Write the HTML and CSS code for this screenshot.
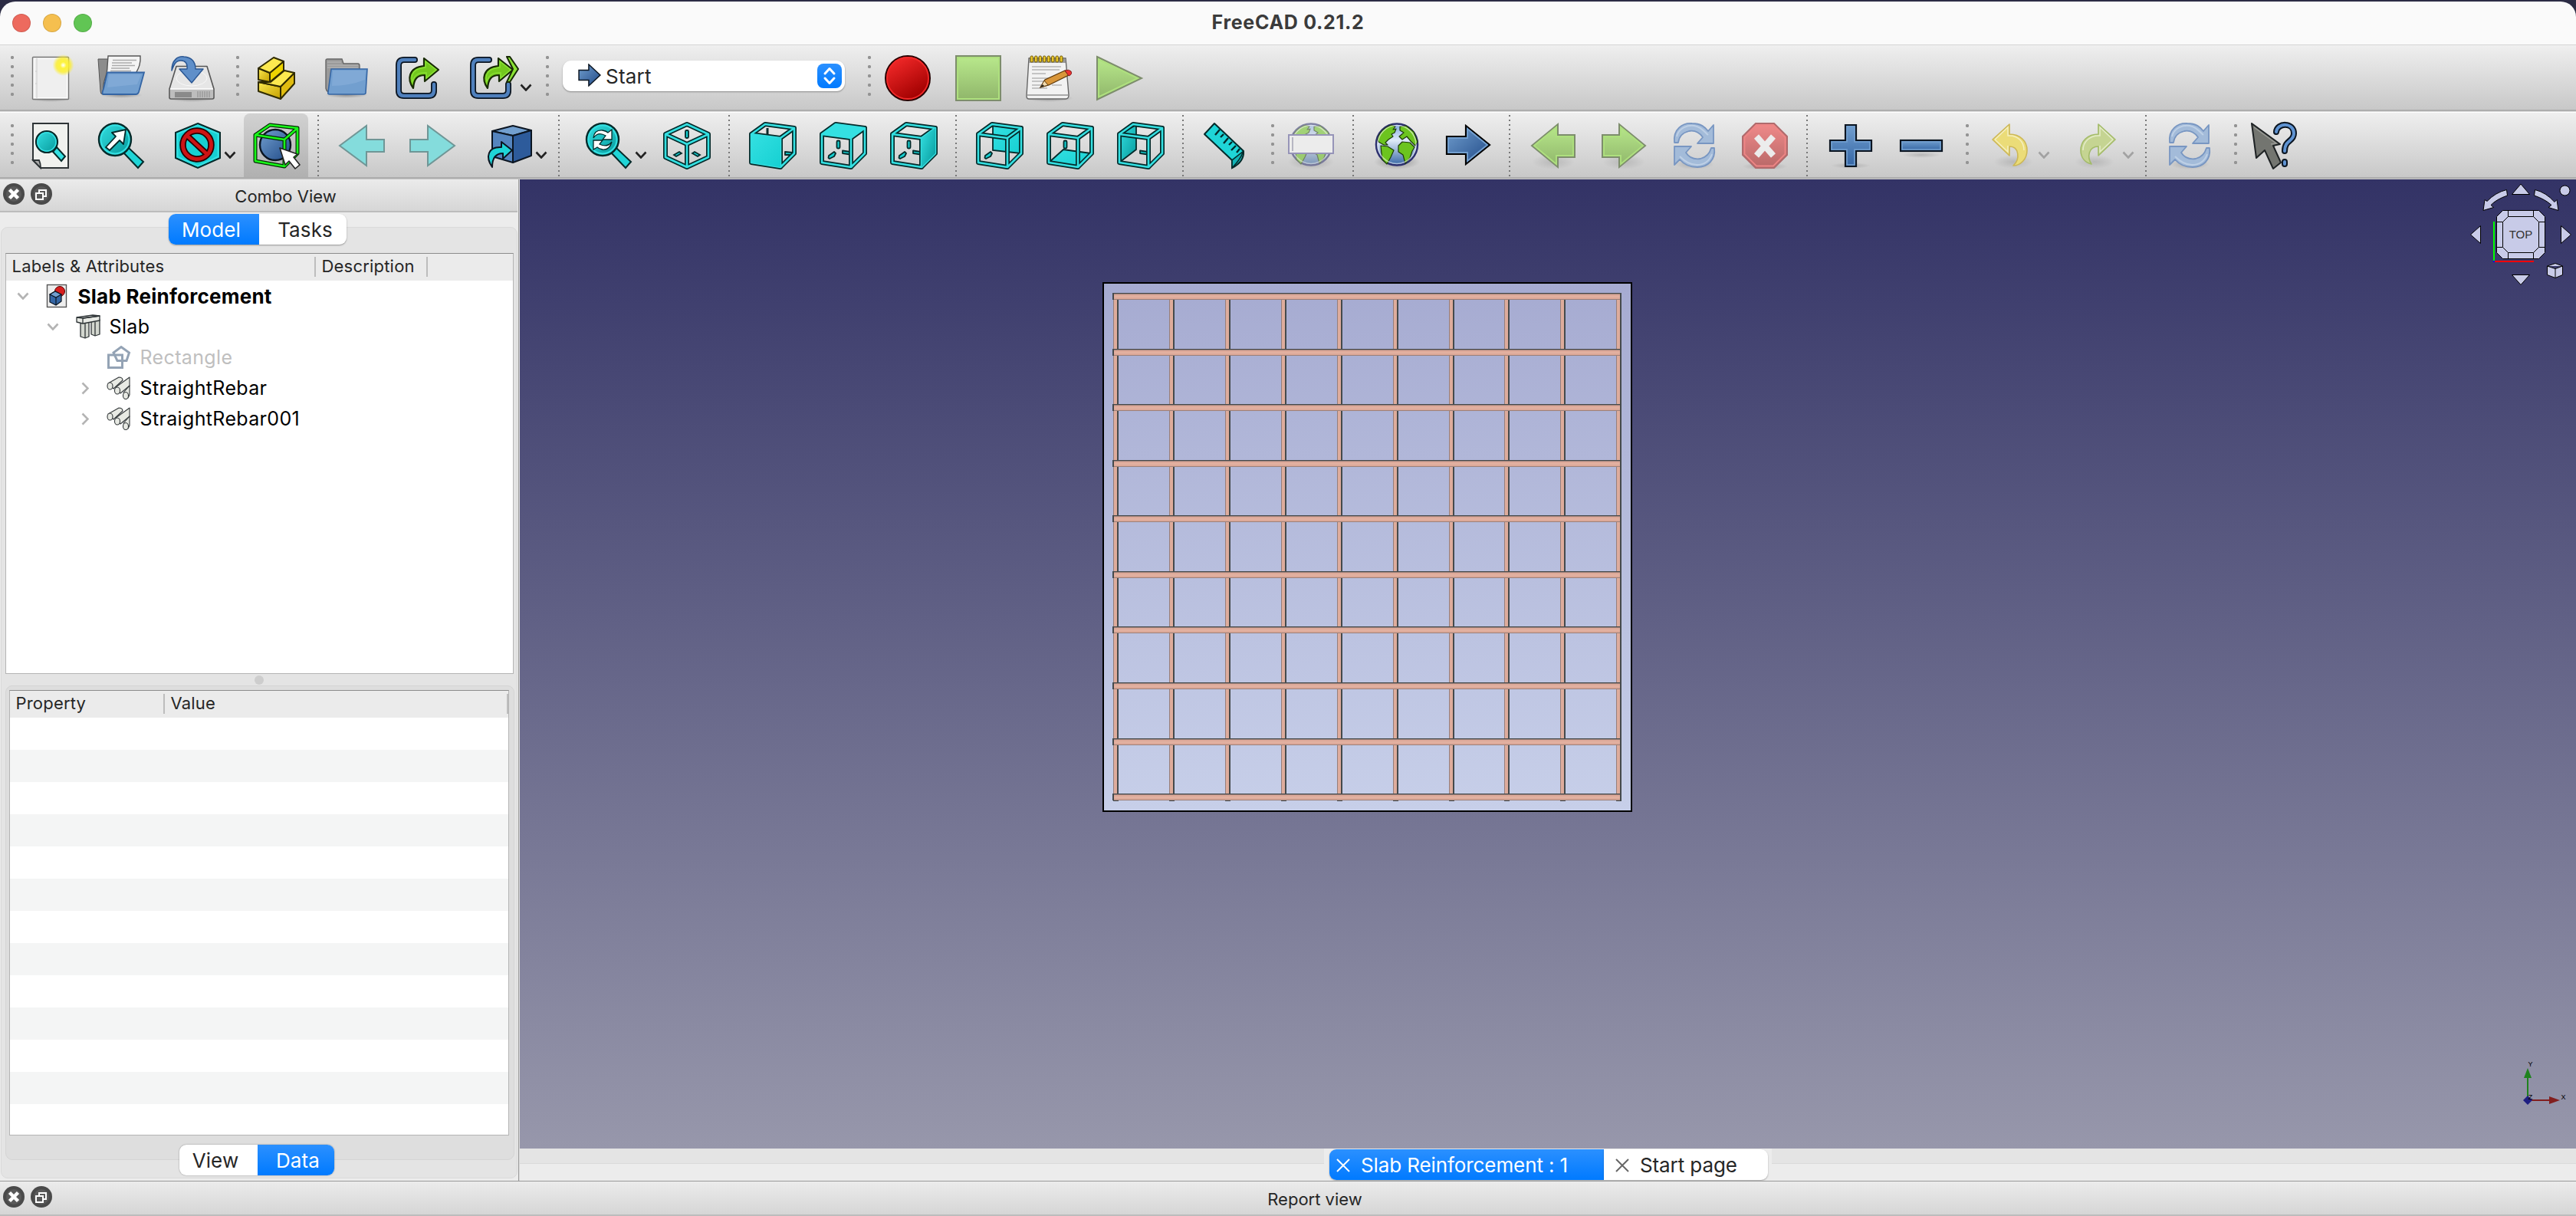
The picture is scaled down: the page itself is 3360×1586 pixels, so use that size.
FILE: index.html
```html
<!DOCTYPE html>
<html lang="en">
<head>
<meta charset="utf-8">
<title>FreeCAD 0.21.2</title>
<link rel="stylesheet" href="styles.css">
</head>
<body>
<svg class="defs" width="0" height="0">
  <defs>
    <linearGradient id="cy" x1="0" y1="0" x2="1" y2="1"><stop offset="0" stop-color="#34e0e2"/><stop offset="1" stop-color="#16d0d2"/></linearGradient>
    <linearGradient id="cyd" x1="0" y1="0" x2="1" y2="1"><stop offset="0" stop-color="#34e0e2"/><stop offset="1" stop-color="#06989a"/></linearGradient>
    <linearGradient id="bl" x1="0" y1="0" x2="1" y2="1"><stop offset="0" stop-color="#729fcf"/><stop offset="1" stop-color="#204a87"/></linearGradient>
    <linearGradient id="bl2" x1="0" y1="0" x2="0" y2="1"><stop offset="0" stop-color="#729fcf"/><stop offset="1" stop-color="#3465a4"/></linearGradient>
    <linearGradient id="gr" x1="0" y1="0" x2="0" y2="1"><stop offset="0" stop-color="#b9e98c"/><stop offset="1" stop-color="#8fb56a"/></linearGradient>
    <linearGradient id="rd" x1="0" y1="0" x2=".6" y2="1"><stop offset="0" stop-color="#ff2f2f"/><stop offset="1" stop-color="#a00000"/></linearGradient>
    <linearGradient id="pk" x1="0" y1="0" x2="0" y2="1"><stop offset="0" stop-color="#f08a8a"/><stop offset="1" stop-color="#b86868"/></linearGradient>
    <linearGradient id="ye" x1="0" y1="0" x2="1" y2="1"><stop offset="0" stop-color="#fce94f"/><stop offset="1" stop-color="#c4a000"/></linearGradient>
    <radialGradient id="sun"><stop offset="0" stop-color="#fff"/><stop offset=".3" stop-color="#fdf33c"/><stop offset=".65" stop-color="#fcee2a" stop-opacity=".8"/><stop offset="1" stop-color="#fcee2a" stop-opacity="0"/></radialGradient>
    <radialGradient id="shade"><stop offset="0" stop-color="#000" stop-opacity=".3"/><stop offset="1" stop-color="#000" stop-opacity="0"/></radialGradient>
    <linearGradient id="slab" x1="0" y1="0" x2="0" y2="1"><stop offset="0" stop-color="#a6abd1"/><stop offset="1" stop-color="#c7cfe9"/></linearGradient>
    <linearGradient id="ocean" x1="0" y1="0" x2="0" y2="1"><stop offset="0" stop-color="#7fa8dc"/><stop offset=".4" stop-color="#dfeaf8"/><stop offset="1" stop-color="#3465a4"/></linearGradient>

    <symbol id="frame" viewBox="0 0 64 64">
      <g fill="none" stroke-linejoin="round"><path d="M4 17 42 22 42 60 4 54ZM4 17 22 4 60 9 42 22M60 9V42L42 60" stroke="#042a2a" stroke-width="6"/><path d="M4 17 42 22 42 60 4 54ZM4 17 22 4 60 9 42 22M60 9V42L42 60" stroke="#34e0e2" stroke-width="2.600"/></g>
    </symbol>
    <symbol id="stubv" viewBox="0 0 64 64"><rect x="23.500" y="25.500" width="4" height="10" rx="1.500" fill="#16d0d2" stroke="#042a2a" stroke-width="1.800"/></symbol>
    <symbol id="stubh" viewBox="0 0 64 64"><path d="M31 38.500 41 40V43.500L31 42Z" fill="#16d0d2" stroke="#042a2a" stroke-width="1.800" stroke-linejoin="round"/></symbol>
    <symbol id="stubhr" viewBox="0 0 64 64"><path d="M48 40 58 41V44L48 44Z" fill="#16d0d2" stroke="#042a2a" stroke-width="1.800" stroke-linejoin="round"/></symbol>
    <symbol id="stubd" viewBox="0 0 64 64"><path d="M13 45 20 40 22 42 20 46 14 49 12.500 48Z" fill="#16d0d2" stroke="#042a2a" stroke-width="1.800" stroke-linejoin="round"/></symbol>

    <symbol id="chev" viewBox="0 0 16 10"><path d="M1.500 1.500 8 8.500 14.500 1.500" fill="none" stroke="currentColor" stroke-width="2.600"/></symbol>
    <symbol id="refresh" viewBox="0 0 64 64">
      <ellipse cx="32" cy="56" rx="26" ry="7" fill="url(#shade)" opacity=".6"/>
      <g fill="#a3bbd9" stroke="#7896c2" stroke-width="1.800" stroke-linejoin="round">
        <path d="M6 28C4 10 17 2 29 3 41 3 46 8 50 13L57 5V29H36L43 21C38 14 31 12 25 13 17 15 12 20 11 28Z"/>
        <path d="M58 35C60 51 49 60 36 60 25 60 18 56 13 50L6 57V33H28L21 41C26 49 33 50 40 49 48 47 52 42 54 35Z"/>
      </g>
      <path d="M9 20C12 8 24 5 32 6 42 8 46 15 50 18M55 43C51 54 43 57 35 57 24 57 17 50 13 46" fill="none" stroke="#bed0e6" stroke-width="2"/>
    </symbol>
    <symbol id="linkarrow" viewBox="0 0 64 64">
      <path d="M28 8H14Q7 8 7 15V48Q7 55 14 55H46Q53 55 53 48V40" fill="none" stroke="#0b1521" stroke-width="8" stroke-linecap="round"/>
      <path d="M28 8H14Q7 8 7 15V48Q7 55 14 55H46Q53 55 53 48V40" fill="none" stroke="#4f80bd" stroke-width="4.500" stroke-linecap="round"/>
      <path d="M40 6 59 21 41 36V28C31 28 27 33 26 45 18 34 19 18 40 16Z" fill="#73c81e" stroke="#172a04" stroke-width="2.200" stroke-linejoin="round"/>
      <path d="M42 10 56 21 43 32V25C32 24 27 28 25 37 22 27 27 19 42 18Z" fill="none" stroke="#8ae234" stroke-width="1.400"/>
    </symbol>
    <symbol id="rebar" viewBox="0 0 32 32">
      <g fill="#e8eae4" stroke="#33383a" stroke-width="1.100" stroke-linejoin="round">
        <path d="M2 10 16 2Q21 2 21 6L9 17Z"/><ellipse cx="4.500" cy="13.500" rx="3.500" ry="4.500"/>
        <path d="M12 15 30 2V13L18 23Z"/><ellipse cx="14" cy="19.500" rx="3.500" ry="4.500"/>
        <path d="M22 22 30 13V25L28 29Z"/><ellipse cx="25" cy="26" rx="3.500" ry="4.500"/>
      </g>
    </symbol>
    <symbol id="dockx" viewBox="0 0 28 28"><circle cx="14" cy="14" r="14" fill="#4a4a4a"/><circle cx="14" cy="14" r="10" fill="#5a5a5a"/><path d="M8.500 8.500 19.500 19.500M19.500 8.500 8.500 19.500" stroke="#fff" stroke-width="4.500"/></symbol>
    <symbol id="dockf" viewBox="0 0 28 28"><circle cx="14" cy="14" r="14" fill="#4a4a4a"/><circle cx="14" cy="14" r="10" fill="#5a5a5a"/><path d="M11 12V9H20V17H17M7 13H16V21H7Z" fill="none" stroke="#fff" stroke-width="2"/></symbol>
    <symbol id="globe" viewBox="0 0 64 64">
      <ellipse cx="32" cy="53" rx="30" ry="10" fill="url(#shade)"/>
      <circle cx="32" cy="30.500" r="27" fill="url(#ocean)" stroke="#2e3170" stroke-width="2.600"/>
      <g fill="#6cc41f" stroke="#1c3a08" stroke-width="1.200" stroke-linejoin="round">
        <path d="M7 24C9 14 17 8 25 5L30 7 27 11 31 10 29 15 25 17 27 20 21 24 17 28 20 31 15 31 8 27Z"/>
        <path d="M11 32 20 33 28 38 24 47 19 56 13 50 12 42Z"/>
        <path d="M34 32 39 27 49 28 55 34 52 39 49 48 43 55 40 44 34 40Z"/>
        <path d="M36 7 44 6 54 14 59 27 56 32 50 26 45 20 39 24 35 20 41 15 36 12Z"/>
      </g>
      <circle cx="32" cy="30.500" r="25" fill="none" stroke="#fff" stroke-opacity=".55" stroke-width="1.600"/>
    </symbol>
  </defs>
</svg>

<div class="window">
  <header class="titlebar">
    <div class="lights"><i class="red"></i><i class="amber"></i><i class="green"></i></div>
    <h1>FreeCAD 0.21.2</h1>
  </header>

  <div class="toolbar">
    <span class="handle first"></span>
    <button class="btn"><svg viewBox="0 0 64 64"><ellipse cx="32" cy="59" rx="28" ry="4" fill="url(#shade)"/><rect x="8.500" y="4.500" width="47" height="55" rx="1" fill="#efefef" stroke="#777" stroke-width="1.400"/><rect x="10.500" y="6.500" width="43" height="51" fill="none" stroke="#fff"/><path d="M14 6V58M12 23h2M12 39h2" stroke="#ccc"/><circle cx="48.500" cy="15" r="14" fill="url(#sun)"/></svg></button>
    <button class="btn"><svg viewBox="0 0 64 64"><ellipse cx="32" cy="54" rx="28" ry="4" fill="url(#shade)"/><path d="M2 7H30L40 50 8 53Q5 53 5 49Z" fill="#8c8c8c" stroke="#555"/><path d="M15 3H57C58 14 54 20 51 26L50 45H9C8 35 14 30 14 17Z" fill="#f4f4f4" stroke="#555" stroke-width="1.400"/><path d="M21 8.500h31M20 12h26M20 15.500h30M19 19h24M18 22.500h27" stroke="#aaa" stroke-width="1.500"/><path d="M14 24.500H62L55 50Q54 53 51 53H9Q6 53 9 46Z" fill="#729fcf" stroke="#3465a4" stroke-width="1.800"/><path d="M16 27H58L53 40 14 44Z" fill="#8db3dd" opacity=".5"/></svg></button>
    <button class="btn"><svg viewBox="0 0 64 64"><ellipse cx="32" cy="59" rx="31" ry="4" fill="url(#shade)"/><path d="M12 16.500H52L61 46V57Q61 59 59 59H5Q3 59 3 57V46Z" fill="#e6e6e6" stroke="#555" stroke-width="1.600" stroke-linejoin="round"/><path d="M4 46H60V58H4Z" fill="#bdbdbd"/><path d="M4 46H60" stroke="#fff" stroke-width="1.500"/><rect x="10" y="50" width="22" height="7" fill="#8a8a8a"/><path d="M40 49v8M43 49v8M46 49v8M49 49v8M52 49v8M55 49v8" stroke="#888"/><ellipse cx="32" cy="32" rx="20" ry="10" fill="none" stroke="#f8f8f8"/><path d="M6 22C6 8 14 3 22 4 33 5 37 11 37 20H47L32 38 16 20H26C27 12 23 9 18 9 11 9 9 14 6 22Z" fill="#5f8fc9" stroke="#2b5793" stroke-width="1.500" stroke-linejoin="round"/></svg></button>
    <span class="handle"></span>
    <button class="btn"><svg viewBox="0 0 64 64"><g stroke="#302b00" stroke-width="2" stroke-linejoin="round"><path d="M9 37 38 43V59L9 49Z" fill="url(#ye)"/><path d="M38 43 56 25V39L38 59Z" fill="#e0bc10"/><path d="M25 37 43 22 56 25 38 43 9 37Z" fill="#fce94f"/><path d="M9 19 24 25V37L9 34Z" fill="url(#ye)"/><path d="M24 25 42 10V22L24 37Z" fill="#edd400"/><path d="M9 19 29 5 42 10 24 25Z" fill="#fce94f"/></g></svg></button>
    <button class="btn"><svg viewBox="0 0 64 64"><ellipse cx="32" cy="54" rx="28" ry="4" fill="url(#shade)"/><path d="M5 9Q5 7 7 7H26L28 13H47Q49 13 49 16V50H10Q6 50 5 45Z" fill="#9a9a9a" stroke="#666" stroke-width="1.400"/><path d="M7 11h18M7 15h40M7 18h40" stroke="#bbb"/><path d="M12 20H59L57 51Q57 53 54 53H10Q7 53 8 50Z" fill="#729fcf" stroke="#3465a4" stroke-width="1.600"/><path d="M14 22H57L56 34Q36 42 13 42Z" fill="#8db3dd" opacity=".5"/></svg></button>
    <button class="btn"><svg viewBox="0 0 64 64"><use href="#linkarrow" x="1"/></svg></button>
    <button class="btn menu"><svg viewBox="0 0 64 64"><use href="#linkarrow" x="-2"/><path d="M49 4H53L64 20 53 37H49L57 20Z" fill="#8ae234" stroke="#172a04" stroke-width="2" stroke-linejoin="round"/></svg><svg class="chev"><use href="#chev"/></svg></button>
    <span class="handle"></span>
    <div class="combo"><svg class="combo-icon" viewBox="0 0 28 28"><path d="M1 8H13V1L27 14 13 27V20H1Z" fill="url(#bl)" stroke="#0b1521" stroke-width="1.400"/></svg><span>Start</span><i class="stepper"><svg viewBox="0 0 32 32"><path d="M10 13 16 6.500 22 13M10 19 16 25.500 22 19" fill="none" stroke="#fff" stroke-width="3" stroke-linecap="round" stroke-linejoin="round"/></svg></i></div>
    <span class="handle"></span>
    <button class="btn"><svg viewBox="0 0 64 64"><circle cx="32" cy="32" r="29" fill="url(#rd)" stroke="#280000" stroke-width="2"/><circle cx="32" cy="32" r="27" fill="none" stroke="#ef2929" stroke-width="1.800"/></svg></button>
    <button class="btn"><svg viewBox="0 0 64 64"><rect x="3" y="3" width="58" height="58" fill="url(#gr)" stroke="#7d8d6c" stroke-width="2"/><rect x="5" y="5" width="54" height="54" fill="none" stroke="#aee07e" stroke-width="2"/></svg></button>
    <button class="btn"><svg viewBox="0 0 64 64"><ellipse cx="32" cy="58" rx="32" ry="5" fill="url(#shade)"/><path d="M6 6H54L58 54Q58 59 54 59H6Q3 59 3 55Z" fill="#f2f2f2" stroke="#666" stroke-width="1.400"/><path d="M6 7H54V12H6Z" fill="#999"/><path d="M4 54H57" stroke="#aaa" stroke-width="2"/><path d="M10 17h38M10 21h36M10 26h18M10 32h38M10 36h28M10 41h18M36 41h13M10 45h20" stroke="#b5b5b5" stroke-width="1.400"/><g fill="#e8c52a" stroke="#6b5500" stroke-width="1"><rect x="8" y="3" width="3.500" height="8" rx="1.500"/><rect x="13.500" y="3" width="3.500" height="8" rx="1.500"/><rect x="19" y="3" width="3.500" height="8" rx="1.500"/><rect x="24.500" y="3" width="3.500" height="8" rx="1.500"/><rect x="30" y="3" width="3.500" height="8" rx="1.500"/><rect x="35.500" y="3" width="3.500" height="8" rx="1.500"/><rect x="41" y="3" width="3.500" height="8" rx="1.500"/><rect x="46.500" y="3" width="3.500" height="8" rx="1.500"/></g><path d="M21 44 27 34 53 22 58 28 32 41Z" fill="#d9963a" stroke="#5e3a0c" stroke-width="1.300"/><path d="M21 44 26 35 31 41Z" fill="#f3dcae" stroke="#5e3a0c"/><path d="M21 44 24 40 26 42Z" fill="#222"/><path d="M53 22Q58 20 61 23 63 27 58 29Z" fill="#e33" stroke="#802020"/></svg></button>
    <button class="btn"><svg viewBox="0 0 64 64"><path d="M3 4 61 32 3 60Z" fill="url(#gr)" stroke="#7d8d6c" stroke-width="2"/><path d="M5 7.500 56 32 5 56.500Z" fill="none" stroke="#aee07e" stroke-width="2"/></svg></button>
  </div>

  <div class="toolbar second">
    <span class="handle first"></span>
    <button class="btn"><svg viewBox="0 0 64 64"><path d="M9 3H55V61H19L9 51Z" fill="#f0f1ee" stroke="#2e3436" stroke-width="2"/><path d="M9 51H17Q19 55 19 61Z" fill="#aaa" stroke="#2e3436" stroke-width="1.800"/><path d="M35 40 40 34 51 46 46 52Z" fill="#34e0e2" stroke="#042a2a" stroke-width="2"/><circle cx="27" cy="27" r="14" fill="url(#cyd)" stroke="#042a2a" stroke-width="2.200"/><circle cx="27" cy="27" r="12" fill="none" stroke="#34e0e2" stroke-width="1.500"/></svg></button>
    <button class="btn"><svg viewBox="0 0 64 64"><path d="M35 41 42 35 61 53 54 61Z" fill="#1fd5d7" stroke="#042a2a" stroke-width="2"/><circle cx="24" cy="24" r="21" fill="url(#cyd)" stroke="#042a2a" stroke-width="2.400"/><circle cx="24" cy="24" r="18.500" fill="none" stroke="#34e0e2" stroke-width="2"/><path d="M38 11 20 15 25 20 12 34 17 38 30 25 35 30Z" fill="#fff" stroke="#042a2a" stroke-width="1.800" stroke-linejoin="round"/></svg></button>
    <button class="btn menu"><svg viewBox="0 0 64 64"><path d="M32 3 61 15V48L32 61 3 48V15Z" fill="#16d0d2" stroke="#042a2a" stroke-width="2"/><path d="M32 5.500 58.500 16.500V46.500L32 58.500 5.500 46.500V16.500Z" fill="none" stroke="#34e0e2" stroke-width="2"/><g fill="none"><circle cx="31" cy="31" r="18.500" stroke="#280000" stroke-width="8.500"/><path d="M17 18 45 44" stroke="#280000" stroke-width="8"/><circle cx="31" cy="31" r="18.500" stroke="#cc1414" stroke-width="5"/><path d="M17 18 45 44" stroke="#cc1414" stroke-width="4.500"/></g></svg><svg class="chev"><use href="#chev"/></svg></button>
    <button class="btn on"><svg viewBox="0 0 64 64"><circle cx="31" cy="31" r="20" fill="url(#bl)" stroke="#0b1521" stroke-width="2.400"/><g fill="none" stroke-linejoin="round"><path d="M5 18 43 24 43 59 5 52ZM5 18 24 5 60 9 43 24M60 9V42L43 59" stroke="#052b05" stroke-width="5"/><path d="M5 18 43 24 43 59 5 52ZM5 18 24 5 60 9 43 24M60 9V42L43 59" stroke="#18f818" stroke-width="2.600"/></g><path d="M37 35 60 43 55 47 63 57 57 62 49 52 44 57Z" fill="#fff" stroke="#222" stroke-width="1.600" stroke-linejoin="round"/></svg></button>
    <span class="sep"></span>
    <button class="btn dim"><svg viewBox="0 0 64 64"><path d="M3 32 38 6V24H61V40H38V58Z" fill="#84dcdc" stroke="#6f9696" stroke-width="2"/></svg></button>
    <button class="btn dim"><svg viewBox="0 0 64 64"><path d="M61 32 26 6V24H3V40H26V58Z" fill="#84dcdc" stroke="#6f9696" stroke-width="2"/></svg></button>
    <button class="btn menu"><svg viewBox="0 0 64 64"><g stroke="#0b1521" stroke-width="2" stroke-linejoin="round"><path d="M10 13 37 6 61 12 37 19Z" fill="#729fcf"/><path d="M10 13 37 19V54L10 46Z" fill="#5585bf"/><path d="M37 19 61 12V45L37 54Z" fill="#2d5b9b"/><path d="M22 27 36 38 24 49V42C15 42 10 47 10 60 1 47 4 33 22 34Z" fill="#1fd5d7"/></g></svg><svg class="chev"><use href="#chev"/></svg></button>
    <span class="sep"></span>
    <button class="btn menu"><svg viewBox="0 0 64 64"><path d="M35 41 42 35 61 53 54 61Z" fill="#1fd5d7" stroke="#042a2a" stroke-width="2"/><circle cx="24" cy="24" r="21" fill="url(#cyd)" stroke="#042a2a" stroke-width="2.400"/><circle cx="24" cy="24" r="18.500" fill="none" stroke="#34e0e2" stroke-width="2"/><path d="M12 22Q13 11 24 12 29 13 31 15L36 11V24H24L28 19Q18 13 12 22ZM36 27Q33 38 24 37 19 36 17 34L12 37V25H24L20 30Q30 35 36 27Z" fill="#fff" stroke="#042a2a" stroke-width="1.300"/></svg><svg class="chev"><use href="#chev"/></svg></button>
    <button class="btn"><svg viewBox="0 0 64 64"><g fill="none" stroke-linejoin="round"><path d="M32 4 60 17V47L32 60 4 47V17ZM4 17 32 30 60 17M32 30V60" stroke="#042a2a" stroke-width="6"/><path d="M32 4 60 17V47L32 60 4 47V17ZM4 17 32 30 60 17M32 30V60" stroke="#34e0e2" stroke-width="2.600"/></g><g fill="#16d0d2" stroke="#042a2a" stroke-width="1.800"><rect x="30" y="12" width="4" height="10" rx="1.500"/><path d="M15 44 22 40 25 42 18 46ZM49 44 42 40 39 42 46 46Z"/></g></svg></button>
    <span class="sep"></span>
    <button class="btn"><svg viewBox="0 0 64 64"><path d="M25 9V18" stroke="#042a2a" stroke-width="3"/><use href="#stubhr"/><use href="#frame"/><path d="M3 17 42 22V60L3 54Z" fill="url(#cy)"/></svg></button>
    <button class="btn"><svg viewBox="0 0 64 64"><use href="#stubv"/><use href="#stubh"/><use href="#stubd"/><use href="#frame"/><path d="M4 17 22 4 60 9 42 22Z" fill="#34e0e2"/></svg></button>
    <button class="btn"><svg viewBox="0 0 64 64"><use href="#stubv"/><use href="#stubh"/><use href="#stubd"/><use href="#frame"/><path d="M42 22 60 9V42L42 60Z" fill="url(#cyd)"/></svg></button>
    <span class="sep"></span>
    <button class="btn"><svg viewBox="0 0 64 64"><path d="M23 5 59 9V42L23 38Z" fill="url(#cy)" stroke="#042a2a" stroke-width="1.800"/><use href="#stubd"/><use href="#frame"/></svg></button>
    <button class="btn"><svg viewBox="0 0 64 64"><path d="M4 54 23 37 59 42 42 60Z" fill="url(#cy)" stroke="#042a2a" stroke-width="1.800"/><use href="#stubv"/><use href="#frame"/></svg></button>
    <button class="btn"><svg viewBox="0 0 64 64"><path d="M4 17 26 5V37L4 54Z" fill="url(#cyd)" stroke="#042a2a" stroke-width="1.800"/><use href="#stubh"/><use href="#frame"/></svg></button>
    <span class="sep"></span>
    <button class="btn"><svg viewBox="0 0 64 64"><path d="M3 17 16 3 54 39Q55 53 39 61V51Z" fill="#1fd5d7" stroke="#042a2a" stroke-width="2" stroke-linejoin="round"/><path d="M54 39 39 51V61Q50 50 53 41Z" fill="#12b4b6" stroke="#042a2a" stroke-width="1.600"/><path d="M23 11 17 18M28 17 24 21M34 22 28 29M39 27 35 31M44 32 38 38M49 36 45 41" stroke="#042a2a" stroke-width="2.400"/></svg></button>
    <span class="handle"></span>
    <button class="btn dim"><svg viewBox="0 0 64 64"><g opacity=".55"><use href="#globe"/></g><rect x="3" y="18" width="58" height="24" fill="#ececec" stroke="#9694b8" stroke-width="2"/><path d="M8 21V39" stroke="#a5a5b5" stroke-width="1.500"/></svg></button>
    <span class="sep"></span>
    <button class="btn"><svg viewBox="0 0 64 64"><use href="#globe"/></svg></button>
    <button class="btn"><svg viewBox="0 0 64 64"><path d="M5 20H30V6L61 31 30 56V43H5Z" fill="url(#bl)" stroke="#000" stroke-width="2.200"/><path d="M7 22H32V10L58 31 32 52V41H7Z" fill="none" stroke="#729fcf" stroke-width="1.800"/></svg></button>
    <span class="sep"></span>
    <button class="btn dim"><svg viewBox="0 0 64 64"><ellipse cx="32" cy="53" rx="28" ry="10" fill="url(#shade)" opacity=".4"/><path d="M4 32 38 4V18H60V47H38V60Z" fill="url(#gr)" stroke="#7d8d6c" stroke-width="2"/><path d="M7 32 36 8V20H58V45H36V56Z" fill="none" stroke="#aee07e" stroke-width="1.800"/></svg></button>
    <button class="btn dim"><svg viewBox="0 0 64 64"><ellipse cx="32" cy="53" rx="28" ry="10" fill="url(#shade)" opacity=".4"/><path d="M60 32 26 4V18H4V47H26V60Z" fill="url(#gr)" stroke="#7d8d6c" stroke-width="2"/><path d="M57 32 28 8V20H6V45H28V56Z" fill="none" stroke="#aee07e" stroke-width="1.800"/></svg></button>
    <button class="btn dim"><svg viewBox="0 0 64 64"><use href="#refresh"/></svg></button>
    <button class="btn dim"><svg viewBox="0 0 64 64"><ellipse cx="32" cy="59" rx="30" ry="5" fill="url(#shade)" opacity=".6"/><path d="M20 3H44L61 20V44L44 61H20L3 44V20Z" fill="url(#pk)" stroke="#b06a6c" stroke-width="2"/><path d="M21 5.500H43L58.500 21V43L43 58.500H21L5.500 43V21Z" fill="none" stroke="#ee8585" stroke-width="1.800"/><path d="M21 20 43 45M43 20 21 45" stroke="#ececec" stroke-width="8"/></svg></button>
    <span class="sep"></span>
    <button class="btn"><svg viewBox="0 0 64 64"><ellipse cx="32" cy="58" rx="26" ry="4" fill="url(#shade)" opacity=".5"/><path d="M25 5H39V25H59V39H39V59H25V39H5V25H25Z" fill="url(#bl2)" stroke="#0b1521" stroke-width="2.200"/><path d="M27 7H37V27H57V37H37V57H27V37H7V27H27Z" fill="none" stroke="#729fcf" stroke-width="1.600"/></svg></button>
    <button class="btn"><svg viewBox="0 0 64 64"><ellipse cx="32" cy="44" rx="26" ry="4" fill="url(#shade)" opacity=".5"/><rect x="5" y="25" width="54" height="14" fill="url(#bl2)" stroke="#0b1521" stroke-width="2.200"/><rect x="7" y="27" width="50" height="10" fill="none" stroke="#729fcf" stroke-width="1.600"/></svg></button>
    <span class="handle"></span>
    <button class="btn menu dim"><svg viewBox="0 0 64 64"><ellipse cx="34" cy="53" rx="26" ry="9" fill="url(#shade)" opacity=".4"/><path d="M7 24 29 4V17C43 17 52 26 52 38 52 50 43 58 34 58 43 50 42 33 29 33V45Z" fill="#ebdc78" stroke="#ccb757" stroke-width="1.600" stroke-linejoin="round"/><path d="M10 24 27 8V19C40 18 48 27 48 38M27 32V40L10 24" fill="none" stroke="#f5efc0" stroke-width="1.500"/></svg><svg class="chev"><use href="#chev"/></svg></button>
    <button class="btn menu dim"><svg viewBox="0 0 64 64"><ellipse cx="30" cy="53" rx="26" ry="9" fill="url(#shade)" opacity=".4"/><path d="M57 24 35 4V17C21 17 12 26 12 38 12 48 18 54 26 56 20 47 22 33 35 33V45Z" fill="#c5d492" stroke="#a3bb68" stroke-width="1.600" stroke-linejoin="round"/><path d="M54 24 37 8V19C24 18 15 27 15 38M37 32V40L54 24" fill="none" stroke="#e4ecc8" stroke-width="1.500"/></svg><svg class="chev"><use href="#chev"/></svg></button>
    <span class="sep"></span>
    <button class="btn dim"><svg viewBox="0 0 64 64"><use href="#refresh"/></svg></button>
    <span class="handle"></span>
    <button class="btn"><svg viewBox="0 0 64 64"><path d="M3 3 40 30 31 32 41 54 31 62 20 38 9 48Z" fill="#737570" stroke="#1e2224" stroke-width="2" stroke-linejoin="round"/><path d="M6 8 35 29 28 30" fill="none" stroke="#999b96" stroke-width="1.400"/><g fill="none" stroke-linecap="round"><path d="M35 14C36 2 58 1 58 16 58 27 46 24 46 39M46 53V56" stroke="#0b1521" stroke-width="8"/><path d="M35 14C36 2 58 1 58 16 58 27 46 24 46 39M46 53V56" stroke="#5f93d2" stroke-width="4"/></g></svg></button>
  </div>

  <main class="work">
    <aside class="panel">
      <div class="docktitle"><svg><use href="#dockx"/></svg><svg><use href="#dockf"/></svg><h2>Combo View</h2></div>
      <div class="segments top"><span class="seg sel">Model</span><span class="seg">Tasks</span></div>
      <section class="group">
        <div class="tree">
          <div class="thead"><span class="c1">Labels &amp; Attributes</span><span class="c2">Description</span></div>
          <div class="row l0"><svg class="tw"><use href="#chev"/></svg><svg class="ic" viewBox="0 0 32 32"><rect x="3.500" y="1.500" width="25" height="29" fill="#eee" stroke="#555" stroke-width="1.400"/><circle cx="20" cy="10" r="6.500" fill="#d81e1e" stroke="#500"/><g stroke="#0b1521" stroke-width="1.200"><path d="M7 14 14 10 22 14V23L15 28 7 24Z" fill="#3465a4"/><path d="M7 14 14 10 22 14 15 18Z" fill="#729fcf"/><path d="M15 18V28"/></g></svg><b>Slab Reinforcement</b></div>
          <div class="row l1"><svg class="tw"><use href="#chev"/></svg><svg class="ic" viewBox="0 0 32 32"><g fill="#d3d7cf" stroke="#2e3436" stroke-width="1.300" stroke-linejoin="round"><path d="M6 11H12L17 9V29L12 31 6 29Z"/><path d="M20 9 31 7V26L25 28 20 26Z"/><path d="M12 12V31M25 10V28"/><path d="M1 4 9 5 31 2V8L9 12 1 10Z" fill="#e8eae5"/><path d="M1 4 22 1 31 2 9 5V12" fill="none"/></g></svg><span>Slab</span></div>
          <div class="row l2 off"><svg class="tw"></svg><svg class="ic" viewBox="0 0 32 32"><g fill="none" stroke="#94a3b5" stroke-width="3"><rect x="2.500" y="13" width="18" height="16.500"/><path d="M19 2.500 29.500 10 26 20.500H14L9 10Z"/></g></svg><span>Rectangle</span></div>
          <div class="row l2"><svg class="tw r"><path d="M1.500 1.500 8.500 8.500 1.500 15.500" fill="none" stroke="currentColor" stroke-width="2.600"/></svg><svg class="ic"><use href="#rebar"/></svg><span>StraightRebar</span></div>
          <div class="row l2"><svg class="tw r"><path d="M1.500 1.500 8.500 8.500 1.500 15.500" fill="none" stroke="currentColor" stroke-width="2.600"/></svg><svg class="ic"><use href="#rebar"/></svg><span>StraightRebar001</span></div>
        </div>
        <div class="splitter"><i></i></div>
        <div class="props">
          <div class="table"><div class="thead"><span class="p1">Property</span><span class="p2">Value</span></div><div class="stripes"></div></div>
        </div>
        <div class="segments bottom"><span class="seg">View</span><span class="seg sel">Data</span></div>
      </section>
    </aside>

    <section class="mdi">
      <div class="viewport">
        <svg class="scene" viewBox="678 234 2682 1264" width="2682" height="1264">
          <defs>
            <g id="vbar"><rect x="0" y="384" width="7" height="661" fill="#967f7c"/><rect x="5" y="384" width="2" height="661" fill="#454a4c"/><rect x="1" y="384" width="4" height="661" fill="#deac9c"/><rect x="0" y="1044" width="5" height="1" fill="#454a4c"/></g>
            <g id="hbar"><rect x="1451" y="0" width="664" height="9" fill="#454a4c"/><rect x="1453" y="1" width="660" height="8" fill="#9b8079"/><rect x="1453" y="2" width="660" height="6" fill="#dda999"/><rect x="1453" y="4" width="660" height="2" fill="#e2b1a1"/></g>
          </defs>
          <rect x="1439" y="369" width="689" height="689" fill="url(#slab)" stroke="#000" stroke-width="2"/>
          <g shape-rendering="crispEdges">
            <use href="#vbar" x="1452"/><use href="#vbar" x="1525"/><use href="#vbar" x="1598"/><use href="#vbar" x="1671"/><use href="#vbar" x="1744"/><use href="#vbar" x="1817"/><use href="#vbar" x="1890"/><use href="#vbar" x="1962"/><use href="#vbar" x="2035"/><use href="#vbar" x="2108"/>
            <use href="#hbar" y="382"/><use href="#hbar" y="455"/><use href="#hbar" y="527"/><use href="#hbar" y="600"/><use href="#hbar" y="672"/><use href="#hbar" y="745"/><use href="#hbar" y="817"/><use href="#hbar" y="890"/><use href="#hbar" y="963"/><use href="#hbar" y="1035"/>
          </g>
          <g fill="#c8cbe8" stroke="#000" stroke-width="1">
            <path d="M3288 240 3299.500 253.500H3276.500ZM3288 371.500 3276.500 358.500H3299.500ZM3222.500 306 3235.500 294.500V317.500ZM3353.500 306 3340.500 294.500V317.500Z"/>
            <path d="M3269.500 247.500 3270.500 255Q3256 260 3249 267.500L3252.500 270.500 3239 274.500 3241 260.500 3244 262.500Q3255 251 3269.500 247.500Z"/>
            <path d="M3306.500 247.500 3305.500 255Q3320 260 3328 267.500L3324 270.500 3337 274.500 3335 260.500 3332 263.500Q3321 251 3306.500 247.500Z"/>
            <circle cx="3345.500" cy="248.500" r="6.500"/>
            <path d="M3264.500 274.500H3311.500L3319.500 282.500V329.500L3311.500 337.500H3264.500L3256.500 329.500V282.500Z"/>
            <path d="M3271.500 274.500V282.500H3304.500V274.500M3271.500 337.500V329.500H3304.500V337.500M3256.500 289.500H3264.500V322.500H3256.500M3319.500 289.500H3311.500V322.500H3319.500M3264.500 289.500 3271.500 282.500M3304.500 282.500 3311.500 289.500M3311.500 322.500 3304.500 329.500M3271.500 329.500 3264.500 322.500" fill="none"/>
            <path d="M3322.500 347 3333 343.500 3342.500 347V358.500L3333 362.500 3322.500 358.500ZM3322.500 347 3333 350.500 3342.500 347M3333 350.500V362.500"/>
          </g>
          <rect x="3252" y="289" width="2" height="52" fill="#0f0"/><rect x="3254" y="340" width="51" height="2" fill="#f00"/><rect x="3252" y="340" width="2" height="2" fill="#00f"/>
          <text x="3288" y="310.500" class="face">TOP</text>
          <path d="M3297 1400V1433" stroke="#1e821e" stroke-width="2"/><path d="M3297 1393 3302 1406H3292Z" fill="#1e821e"/>
          <path d="M3300 1435H3328" stroke="#821e1e" stroke-width="2"/><path d="M3339 1435 3325 1430V1440Z" fill="#821e1e"/>
          <path d="M3297 1429 3303 1435 3297 1441 3291 1435Z" fill="#1e1e82"/>
          <g class="axis"><text x="3300.500" y="1391">Y</text><text x="3300.500" y="1434">Z</text><text x="3343.500" y="1434">X</text></g>
        </svg>
      </div>
      <div class="doctabs"><div class="tabwrap">
        <span class="dtab sel"><svg viewBox="0 0 18 18"><path d="M1 1 17 17M17 1 1 17" stroke="currentColor" stroke-width="2"/></svg><span>Slab Reinforcement : 1</span></span>
        <span class="dtab"><svg viewBox="0 0 18 18"><path d="M1 1 17 17M17 1 1 17" stroke="currentColor" stroke-width="2"/></svg><span>Start page</span></span>
      </div></div>
    </section>
  </main>

  <div class="docktitle report"><svg><use href="#dockx"/></svg><svg><use href="#dockf"/></svg><h2>Report view</h2></div>
</div>
</body>
</html>
```
FILE: styles.css
```css
* { box-sizing: border-box; }
body { margin: 0; background: #2c2c44; font-family: Inter, "Liberation Sans", sans-serif; font-size: 26px; color: #262626; }
h1, h2 { margin: 0; }
.defs { display: block; height: 0; }
.window { width: 3360px; height: 1586px; padding-top: 2px; display: flex; flex-direction: column; overflow: hidden; }
.titlebar { height: 57px; flex: none; position: relative; background: #fafafa; border-bottom: 1px solid #d4d4d4; border-radius: 20px 20px 0 0; display: flex; align-items: center; justify-content: center; }
.titlebar h1 { font-size: 25px; font-weight: 700; color: #3b3b3b; line-height: 50px; padding-bottom: 2px; letter-spacing: .7px; }
.lights { position: absolute; left: 16px; top: 16px; display: flex; gap: 16px; }
.lights i { width: 24px; height: 24px; border-radius: 50%; border: 1px solid rgba(0,0,0,.12); }
.red { background: #ed6a5e; } .amber { background: #f5bf4f; } .green { background: #61c554; }

.toolbar { height: 87px; flex: none; display: flex; background: linear-gradient(#efefef, #c8c8c8 84px); border-bottom: 1px solid #dcdcdc; box-shadow: inset 0 -2px #adadad; }
.toolbar.second { height: 88px; border-top: 1px solid #fff; border-bottom-color: #c6c6c6; }
.handle { flex: none; width: 18px; height: 60px; margin-top: 10px; background: radial-gradient(circle at 14px 6px, #949494 1.8px, transparent 2.5px) 0 0 / 18px 12px repeat-y; }
.second .handle { margin-top: 11px; }
.handle.first { margin-left: 2px; }
.btn { flex: none; width: 92px; height: 84px; padding: 1px 14px 0; margin: 0; border: 0; background: none; display: flex; align-items: center; color: #222; }
.btn > svg { width: 64px; height: 64px; flex: none; overflow: visible; }
.btn.menu { width: 110px; padding-left: 22px; padding-right: 0; }
.btn > .chev { width: 16px; height: 10px; margin: 24px 0 0 2px; }
.second .btn { padding-top: 2px; }
.second .btn.on { width: 84px; height: 83px; margin: 1px 4px 0; padding: 0 10px; background: linear-gradient(#d2d2d2, #b0b0b0); border-radius: 8px 8px 0 0; }
.btn.dim { color: #a2a2a2; }
.sep { flex: none; width: 2px; height: 80px; margin: 3px 10px 0 8px; background: repeating-linear-gradient(#777 0 2px, transparent 2px 6px); }
.combo { flex: none; width: 368px; height: 40px; margin: 20px 18px 0 16px; background: #fff; border-radius: 11px; box-shadow: 0 1px 2px rgba(0,0,0,.35); display: flex; align-items: center; padding: 0 4px 0 20px; }
.combo span { flex: 1; margin-left: 6px; letter-spacing: .2px; }
.combo-icon { width: 30px; height: 30px; margin-top: -3px; }
.stepper { width: 32px; height: 32px; border-radius: 8px; background: linear-gradient(#2b90ff, #007aff); }
.stepper svg { display: block; }

.work { flex: none; height: 1306px; display: flex; background: #ececec; }
.panel { width: 678px; display: flex; flex-direction: column; align-items: center; border-right: 1px solid #ddd; box-shadow: inset -1px 0 #999; padding-right: 2px; }
.docktitle { align-self: stretch; flex: none; height: 43px; display: flex; align-items: center; gap: 8px; padding: 0 0 3px 4px; background: linear-gradient(#ebebeb, #d6d6d6); border-bottom: 2px solid #bcbcbc; position: relative; }
.docktitle svg { width: 28px; height: 28px; flex: none; }
.docktitle h2 { font-size: 22px; font-weight: 400; position: absolute; left: 70px; right: 0; text-align: center; top: 7px; line-height: 30px; }
.segments { display: flex; height: 40px; border-radius: 9px; background: #fff; box-shadow: 0 1px 2px rgba(0,0,0,.35); overflow: hidden; position: relative; z-index: 1; flex: none; }
.segments.top { width: 232px; margin-top: 2px; margin-bottom: -23px; margin-left: -3px; }
.seg { flex: 1; text-align: center; line-height: 41px; letter-spacing: .1px; }
.seg:first-child { padding-right: 7px; }
.seg:last-child { padding-left: 6px; }
.top .seg.sel { flex: 0 0 118px; }
.sel { background: linear-gradient(#2b90ff, #007aff); color: #fff; }
.group { width: 674px; height: 1241px; flex: none; background: #e4e4e4; border: 1px solid #dadada; border-radius: 9px; padding: 33px 5px 0; display: flex; flex-direction: column; }
.tree { height: 549px; width: 663px; background: #fff; border: 1px solid #b4b4b4; border-top: 1px solid #8c8c8c; color: #000; font-size: 25px; letter-spacing: .35px; }
.tree b { font-size: 26px; letter-spacing: .25px; }
.thead { height: 35px; background: #ebebeb; font-size: 22px; line-height: 30px; color: #262626; display: flex; padding-top: 4px; letter-spacing: .2px; }
.thead span { height: 26px; line-height: 24px; border-right: 2px solid #bdbdbd; padding-left: 8px; white-space: nowrap; }
.c1 { width: 404px; } .c2 { width: 146px; }
.row { height: 40px; display: flex; align-items: center; white-space: nowrap; }
.l0 { padding-left: 14px; } .l1 { padding-left: 53px; } .l2 { padding-left: 93px; }
.tw { width: 16px; height: 10px; color: #b4b4b4; flex: none; margin-right: 22px; }
.tw.r { width: 10px; height: 17px; margin: 0 23px 0 5px; }
.ic { width: 32px; height: 32px; flex: none; margin-right: 12px; }
.l0 .ic { margin: 0 12px 0 -2px; }
.off { color: #bfbfbf; }
.splitter { height: 15px; display: flex; justify-content: center; align-items: center; }
.splitter i { width: 12px; height: 12px; border-radius: 50%; background: #cdcdcd; }
.props { height: 619px; flex: none; width: 664px; background: #dedede; border: 1px solid #d4d4d4; border-radius: 9px; padding: 5px 6px 0 4px; }
.table { height: 581px; border: 1px solid #b4b4b4; border-top: 1px solid #8c8c8c; background: #fff; }
.p1 { width: 202px; } .p2 { width: 448px; }
.stripes { height: 544px; background: repeating-linear-gradient(#fff 0 42px, #f4f5f5 42px 84px); }
.segments.bottom { width: 202px; margin: -20px 0 0 227px; box-shadow: 0 0 2px rgba(0,0,0,.4); }
.bottom .seg.sel { flex: 0 0 100px; }

.mdi { width: 2682px; }
.viewport { height: 1264px; background: linear-gradient(#333366, #9797ab); }
.scene { display: block; }
.face { font: 15px "Liberation Sans", Arial, sans-serif; text-anchor: middle; fill: #333; }
.axis { font: 9px "Liberation Sans", Arial, sans-serif; text-anchor: middle; fill: #000; }
.doctabs { height: 42px; display: flex; justify-content: center; background: linear-gradient(#e4e4e4 19px, #dadada 19px 20px, #ececec 20px); }
.tabwrap { width: 584px; height: 42px; background: #ececec; padding: 1px 5px 0 7px; display: flex; }
.dtab { height: 40px; width: 214px; background: #fff; border-radius: 0 9px 9px 0; display: flex; align-items: center; gap: 14px; padding: 1px 0 0 15px; box-shadow: 0 1px 2px rgba(0,0,0,.3); white-space: nowrap; letter-spacing: -.1px; }
.dtab svg { width: 18px; height: 18px; flex: none; color: #666; }
.dtab.sel { width: 358px; border-radius: 9px 0 0 9px; background: linear-gradient(#2b90ff, #007aff); padding-left: 9px; }
.dtab.sel svg { color: #fff; }
.report { height: 46px; border-top: 1px solid #999; }
.report h2 { top: 8px; }
```
